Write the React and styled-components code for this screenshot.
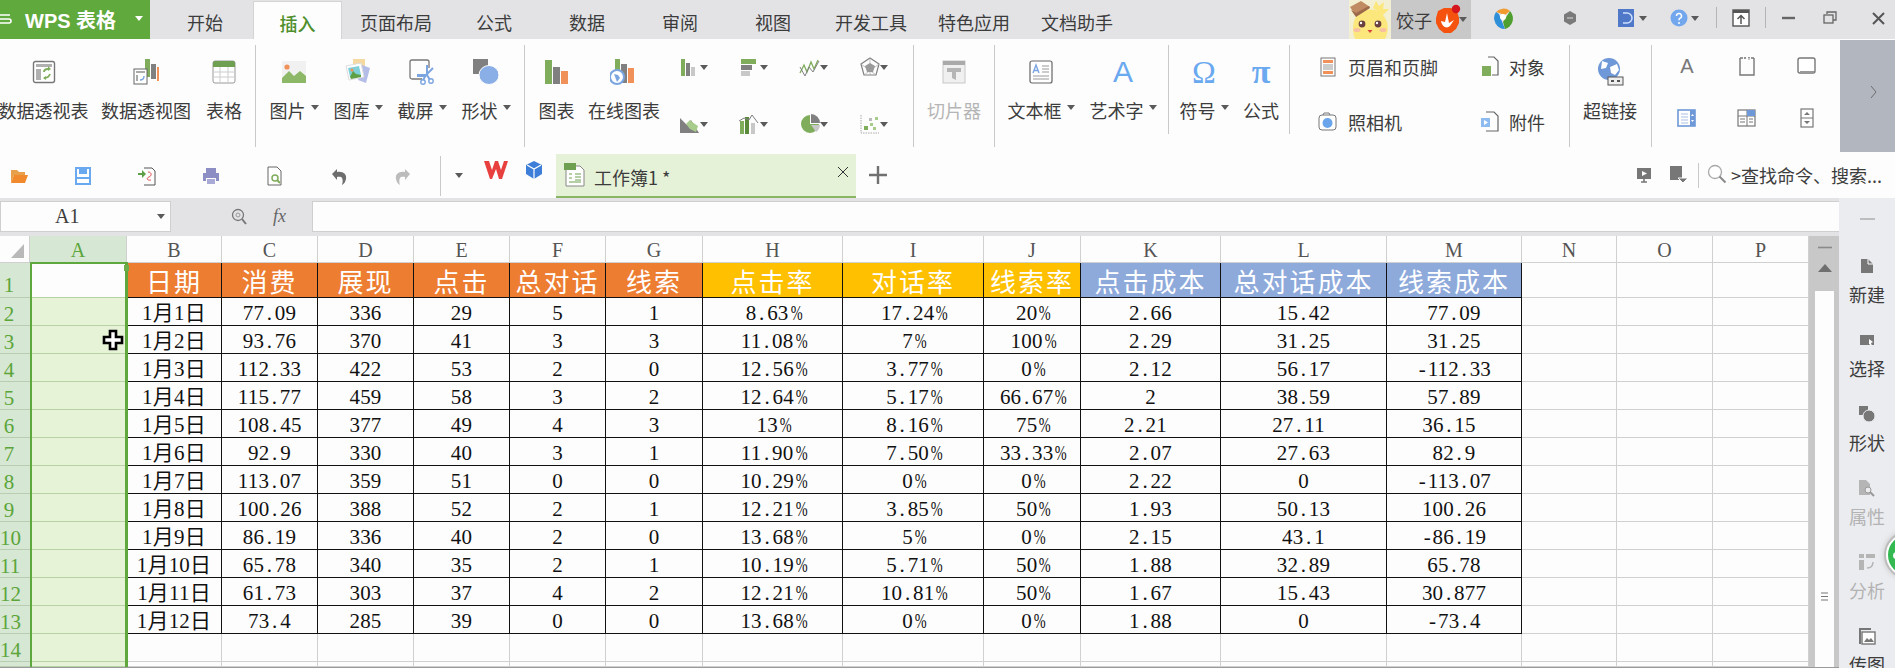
import React from 'react';
import styled, { createGlobalStyle } from 'styled-components';

const G = '#7fad5c';
const GR = '#808080';
const OR = '#f0915a';
const BL = '#7aa5e0';

const Global = createGlobalStyle`
    html, body { margin: 0; padding: 0; background: #fdfdfd; }
    * { box-sizing: border-box; }
`;

const Page = styled.div`
    width: 1895px;
    height: 668px;
    overflow: hidden;
    display: flex;
    flex-direction: column;
    font-family: "Noto Sans CJK SC", "Liberation Sans", sans-serif;
    font-size: 18px;
    color: #3c3c3c;
    background: #fdfdfd;
`;

/* title bar */
const TitleBar = styled.div`
    height: 39px;
    flex: none;
    display: flex;
    background: #e3e3e6;
`;

const AppMenu = styled.div`
    width: 150px;
    display: flex;
    align-items: center;
    padding-left: 25px;
    position: relative;
    background: #60a93c;
    color: #fff;
    font-family: "Liberation Sans", "Noto Sans CJK SC", sans-serif;
    font-size: 20px;
    font-weight: 700;
    white-space: nowrap;
    svg { position: absolute; left: 0; top: 13px; }
    i {
        position: absolute;
        left: 135px;
        top: 16px;
        border: 4px solid transparent;
        border-top: 5px solid #fff;
        border-bottom: 0;
    }
`;

const Tabs = styled.div`
    display: flex;
    padding-left: 7px;
`;

const Tab = styled.div`
    width: ${p => p.$w}px;
    display: flex;
    justify-content: center;
    align-items: center;
    padding-top: 5px;
    white-space: nowrap;
    ${p => p.$active && `
        margin-top: 1px;
        background: #fdfdfd;
        border: 1px solid #d4d4d4;
        border-bottom: 0;
        color: #4f8f2c;
        font-weight: 500;
    `}
`;

const TitleRight = styled.div`
    margin-left: auto;
    display: flex;
`;

const UserChip = styled.div`
    width: 122px;
    display: flex;
    align-items: center;
    background: #c8c8c8;
    span { margin-left: 5px; white-space: nowrap; }
`;

const Slot = styled.div`
    width: ${p => p.$w}px;
    padding-left: ${p => p.$pad || 0}px;
    padding-bottom: 3px;
    display: flex;
    justify-content: center;
    align-items: center;
    gap: 3px;
`;

const TopSep = styled.div`
    width: 1px;
    height: 21px;
    margin-top: 7px;
    margin-left: ${p => p.$ml || 0}px;
    background: #b4b4b4;
`;

const Caret = styled.i`
    display: inline-block;
    flex: none;
    width: 0;
    height: 0;
    margin-left: ${p => p.$ml ?? 5}px;
    margin-bottom: ${p => p.$mb ?? 5}px;
    border-left: 4px solid transparent;
    border-right: 4px solid transparent;
    border-top: 5px solid ${p => p.$color || '#5a5a5a'};
`;

const Ico = styled.svg`
    display: block;
    flex: none;
`;

const Svg = ({ w = 24, h = 24, children }) => (
    <Ico width={w} height={h} viewBox={`0 0 ${w} ${h}`}>{children}</Ico>
);

/* ribbon */
const Ribbon = styled.div`
    height: 113px;
    flex: none;
    display: flex;
    background: #fdfdfd;
`;

const Group = styled.div`
    width: ${p => p.$w}px;
    height: ${p => (p.$short ? 89 : 102)}px;
    margin-top: 6px;
    padding-left: ${p => p.$pad || 0}px;
    display: flex;
    flex: none;
    border-right: ${p => (p.$last ? '0' : '1px solid #c9c9c9')};
`;

const BigBtn = styled.div`
    width: ${p => p.$w}px;
    flex: none;
    display: flex;
    flex-direction: column;
    align-items: center;
    padding-top: 7px;
    color: ${p => (p.$off ? '#b5b5b5' : 'inherit')};
`;

const BigIcon = styled.div`
    height: 40px;
    display: flex;
    align-items: center;
    justify-content: center;
`;

const BigGlyph = styled.span`
    font-family: ${p => (p.$serif ? '"Liberation Serif"' : '"Liberation Sans"')}, serif;
    font-size: ${p => p.$size || 30}px;
    font-weight: ${p => (p.$bold ? 700 : 400)};
    line-height: 40px;
    color: #6aa9f0;
`;

const BigLabel = styled.div`
    height: 24px;
    margin-top: 6px;
    line-height: 24px;
    display: flex;
    align-items: center;
    white-space: nowrap;
`;

const ChartGrid = styled.div`
    display: grid;
    grid-template-columns: repeat(4, 60px);
    grid-auto-rows: 30px;
    row-gap: 27px;
    padding-top: 7px;
`;

const ChartPick = styled.div`
    display: flex;
    align-items: center;
    padding-left: 18px;
    i { margin-left: -2px; margin-bottom: 0; }
`;

const SmallGrid = styled.div`
    display: grid;
    grid-template-columns: ${p => p.$cols};
    grid-auto-rows: 30px;
    row-gap: ${p => p.$gap}px;
    padding-top: ${p => p.$top}px;
    padding-left: ${p => p.$left}px;
`;

const SmallBtn = styled.div`
    display: flex;
    align-items: center;
    gap: 8px;
    white-space: nowrap;
`;

const SmallIcon = styled.div`
    display: flex;
    align-items: center;
    justify-content: center;
`;

const Letter = styled.span`
    font-family: "Liberation Sans", sans-serif;
    font-size: 20px;
    color: #777;
`;

const RibbonNext = styled.div`
    width: 55px;
    margin-top: 1px;
    padding-left: 12px;
    display: flex;
    align-items: center;
    justify-content: center;
    background: #b2b6be;
    svg { margin-bottom: 8px; }
`;

/* quick access */
const QuickBar = styled.div`
    height: 46px;
    flex: none;
    display: flex;
    background: #fdfdfd;
`;

const QuickIcons = styled.div`
    display: flex;
    align-items: center;
    gap: 44px;
    padding-left: 9px;
    svg { margin-top: 2px; }
`;

const QuickSep = styled.div`
    width: 1px;
    height: ${p => p.$h}px;
    margin: ${p => p.$top}px 0 0 ${p => p.$ml}px;
    background: #c9c9c9;
`;

const DocTools = styled.div`
    display: flex;
    align-items: center;
    padding-bottom: 8px;
`;

const DocTab = styled.div`
    width: 300px;
    height: 44px;
    margin-top: 2px;
    padding-left: 8px;
    display: flex;
    align-items: center;
    background: #e5f2d8;
    border-bottom: 2px solid #8ab565;
    span { margin-left: 8px; margin-top: 4px; white-space: nowrap; }
    svg:last-child { margin-left: auto; margin-right: 7px; margin-bottom: 6px; }
`;

const AddTab = styled.div`
    width: 44px;
    display: flex;
    justify-content: center;
    align-items: center;
`;

const QuickRight = styled.div`
    margin-left: auto;
    padding-right: 13px;
    display: flex;
    align-items: center;
    white-space: nowrap;
`;

/* body */
const Body = styled.div`
    flex: 1;
    display: flex;
`;

const Main = styled.div`
    width: 1839px;
    padding-top: 3px;
    background: #e3e3e6;
`;

const FormulaBar = styled.div`
    height: 31px;
    margin-bottom: 4px;
    display: flex;
`;

const NameBox = styled.div`
    width: 171px;
    display: flex;
    align-items: center;
    padding-left: 54px;
    background: #fdfdfd;
    border: 1px solid #cfcfcf;
    font-family: "Liberation Serif", serif;
    font-size: 20px;
    i { margin-left: auto; margin-right: 5px; margin-bottom: 0; }
`;

const FxTools = styled.div`
    width: 141px;
    display: flex;
    align-items: center;
    padding-left: 60px;
    gap: 26px;
    span {
        font-family: "Liberation Serif", serif;
        font-style: italic;
        font-size: 18px;
        color: #666;
    }
`;

const FormulaInput = styled.div`
    flex: 1;
    background: #fdfdfd;
    border: 1px solid #cfcfcf;
    border-right: 0;
`;

const SheetRow = styled.div`
    height: 432px;
    display: flex;
    background: #fdfdfd;
    border-bottom: 1px solid #9a9a9a;
`;

const SheetGrid = styled.div`
    position: relative;
    width: 1809px;
    display: grid;
    grid-template-columns: 30px 97px 95px 96px 96px 96px 96px 97px 140px 141px 97px 140px 166px 135px 95px 96px 96px;
    grid-template-rows: 27px 35px repeat(13, 28px) 5px;
    font-family: "Liberation Serif", "Noto Sans CJK SC", serif;
`;

const Corner = styled.div`
    position: relative;
    border-right: 1px solid #d0d0d0;
    border-bottom: 1px solid #d0d0d0;
    i {
        position: absolute;
        left: 11px;
        top: 8px;
        border-left: 13px solid transparent;
        border-bottom: 14px solid #b9b9b9;
    }
`;

const ColHead = styled.div`
    display: flex;
    align-items: center;
    justify-content: center;
    padding-top: 3px;
    font-size: 20px;
    color: ${p => (p.$on ? '#5ba53a' : '#555')};
    background: ${p => (p.$on ? '#d6e7d3' : '#fdfdfd')};
    border-right: 1px solid #d0d0d0;
    border-bottom: 1px solid #d0d0d0;
`;

const RowHead = styled.div`
    padding-right: 12px;
    text-align: center;
    font-size: 21px;
    line-height: 32px;
    height: 100%;
    overflow: hidden;
    color: #5ba53a;
    background: #d6e7d3;
    border-bottom: 1px solid #b9cdb3;
    ${p => p.$tall && 'line-height: 44px;'}
`;

const SelCell = styled.div`
    background: ${p => (p.$first ? '#fdfdfd' : '#e6f3d7')};
    border-bottom: 1px solid #b7d3a5;
`;

const BlankCell = styled.div`
    border-right: 1px solid #d0d0d0;
    border-bottom: 1px solid #d0d0d0;
`;

const HeadCell = styled.div`
    display: flex;
    align-items: center;
    justify-content: center;
    font-size: 26px;
    letter-spacing: 2px;
    white-space: nowrap;
    color: #fff;
    background: ${p => p.$bg};
    border-right: 1px solid #111;
    border-bottom: 1px solid #111;
`;

const DataCell = styled.div`
    display: flex;
    align-items: center;
    justify-content: center;
    padding-top: 3px;
    padding-right: ${p => (p.$shift ? 10 : 0)}px;
    font-size: 21px;
    line-height: 24px;
    letter-spacing: 0.2px;
    white-space: nowrap;
    color: #111;
    border-right: 1px solid #111;
    border-bottom: 1px solid #111;
`;

const Half = styled.span`
    display: inline-block;
    width: 10.7px;
    text-align: center;
    ${p => p.$squeeze && 'transform: scaleX(0.68);'}
`;

const SelectionFrame = styled.div`
    position: absolute;
    left: 30px;
    top: 26px;
    bottom: 0;
    width: 98px;
    border-left: 2px solid #5fa83e;
    border-right: 3px solid #5fa83e;
    border-top: 2px solid #5fa83e;
    pointer-events: none;
`;

const FillHandle = styled.div`
    position: absolute;
    right: -4px;
    top: 1px;
    width: 6px;
    height: 6px;
    background: #6dae4b;
    border-left: 1px solid #fff;
`;

const CrossCursor = styled.div`
    position: absolute;
    left: 70px;
    top: 65px;
`;

const ScrollBar = styled.div`
    width: 30px;
    display: flex;
    flex-direction: column;
    padding: 0 5px 0 6px;
    background: #c8c8c8;
`;

const ScrollTop = styled.div`
    height: 55px;
    flex: none;
    display: flex;
    flex-direction: column;
    align-items: center;
    padding-top: 10px;
    gap: 15px;
`;

const ScrollTrack = styled.div`
    flex: 1;
    display: flex;
    align-items: flex-end;
    justify-content: center;
    padding-bottom: 66px;
    background: #fdfdfd;
`;

const SidePanel = styled.div`
    position: relative;
    width: 56px;
    height: 470px;
    padding-top: 20px;
    display: flex;
    flex-direction: column;
    align-items: center;
    background: #ebecf0;
`;

const SideGrip = styled.div`
    width: 15px;
    height: 4px;
    margin-bottom: 34px;
    border-top: 1px solid #bdbdbd;
    border-bottom: 1px solid #bdbdbd;
`;

const SideItem = styled.div`
    height: 74px;
    flex: none;
    display: flex;
    flex-direction: column;
    align-items: center;
    color: ${p => (p.$off ? '#b3b3b3' : 'inherit')};
`;

const SideIcon = styled.div`
    height: 24px;
    display: flex;
    align-items: center;
`;

const SideLabel = styled.div`
    margin-top: 4px;
    line-height: 24px;
`;

const FloatBall = styled.div`
    position: absolute;
    left: 47px;
    top: 335px;
    width: 44px;
    height: 44px;
    display: flex;
    align-items: center;
    padding-left: 5px;
    border-radius: 50%;
    background: #34b852;
    border: 2px solid #fff;
    box-shadow: 0 0 0 2px #bcbcbc, 0 0 5px 3px #d0d0d0;
    i { width: 7px; height: 7px; border-radius: 50%; background: #fff; }
`;

/* drawings */
const icons = {
    pivot: <Svg><rect x="1.5" y="1.5" width="21" height="21" rx="2" fill="#fff" stroke="#777" strokeWidth="1.4"/><path d="M4 4h16v3H4zM4 9h5v11H4z" fill="#b0b0b0"/><path d="M12 18c3 0 5-1 6-4M16 9c-2 0-4 1-4 3" fill="none" stroke={G} strokeWidth="1.8"/><path d="M16 6l3 3-3 2zM14 16l-3 2 3 2z" fill={G}/></Svg>,
    pivotChart: <Svg w={26} h={26}><path d="M12 0h5v18h-5z" fill={G}/><path d="M18 5h5v15h-5z" fill={GR}/><path d="M24 8h2v14h-2z" fill={OR}/><rect x="1" y="10" width="13" height="15" fill="#fff" stroke="#666"/><path d="M3 12h9v2H3zM3 16h2v6H3z" fill="#aaa"/><path d="M7 21c3 0 4-1 4-4" fill="none" stroke={BL} strokeWidth="1.4"/></Svg>,
    table: <Svg><rect x="1" y="1" width="22" height="22" rx="2" fill="#fff" stroke="#999"/><path d="M1 3a2 2 0 0 1 2-2h18a2 2 0 0 1 2 2v4H1z" fill="#6f9f50"/><path d="M1 12h22M1 17h22M8 7v16M16 7v16" stroke="#ccc"/></Svg>,
    picture: <Svg w={26} h={26}><rect x="1" y="2" width="24" height="22" fill="#f1f1f1"/><circle cx="6" cy="8" r="2.6" fill={OR}/><path d="M1 24v-5l7-7 5 5 6-5 6 5v7z" fill="#8db867"/></Svg>,
    gallery: <Svg w={26} h={26}><path d="M8 0h12v18H8z" fill="#f5d9a0"/><path d="M17 6l8 3-4 15-8-3z" fill="#b4bde8"/><path d="M1 7l15-3 3 14-15 3z" fill="#fff" stroke="#ddd"/><path d="M3 9l11-2 2 9-11 2z" fill="#7fd0d8"/><path d="M5 18l3-6 3 3 5 1 0 2-10 2z" fill="#5f9f45"/><circle cx="7" cy="11" r="1.5" fill={OR}/></Svg>,
    shot: <Svg w={26} h={26}><path d="M13 20H3a2 2 0 0 1-2-2V3a2 2 0 0 1 2-2h15a2 2 0 0 1 2 2v6" fill="none" stroke="#777" strokeWidth="1.3"/><path d="M18 6v10l3 5M24 9l-7 7-3 5" fill="none" stroke={BL} strokeWidth="2"/><path d="M8 15h9v3H8z" fill={BL}/><circle cx="14" cy="23" r="2.2" fill="#fff" stroke={BL} strokeWidth="1.4"/><circle cx="22" cy="22" r="2.2" fill="#fff" stroke={BL} strokeWidth="1.4"/></Svg>,
    shape: <Svg w={26} h={26}><rect x="0" y="0" width="15" height="15" fill={GR}/><ellipse cx="16" cy="16" rx="10" ry="9.5" fill="#8aaee6" stroke="#fff"/></Svg>,
    chart: <Svg w={26} h={26}><path d="M1 1h7v24H1z" fill={G}/><path d="M9 8h7v17H9z" fill={GR}/><path d="M17 12h7v13h-7z" fill={OR}/></Svg>,
    online: <Svg w={28} h={26}><path d="M5 0h5v14H5z" fill={G}/><path d="M11 5h6v19h-6z" fill={GR}/><path d="M18 9h6v15h-6z" fill={OR}/><circle cx="7" cy="18" r="7" fill="#fff" stroke={BL} strokeWidth="2"/><path d="M4 15l4 1 2 3-3 4z" fill={BL}/></Svg>,
    mColumn: <Svg><path d="M3 4h4v17H3z" fill={G}/><path d="M8 8h4v13H8z" fill={GR}/><path d="M13 12h4v9h-4z" fill="#c8c8c8"/></Svg>,
    mBar: <Svg><path d="M3 4h15v5H3z" fill={G}/><path d="M3 10h11v5H3z" fill={GR}/><path d="M3 16h9v5H3z" fill="#c8c8c8"/></Svg>,
    mLine: <Svg><path d="M2 18l4-8 3 7 4-10 3 7 4-9" fill="none" stroke={G} strokeWidth="1.3"/><path d="M2 12l5 9 4-9 4 5 6-11" fill="none" stroke={GR}/></Svg>,
    mRadar: <Svg><path d="M12 3l9 6-3 11H6L3 9z" fill="none" stroke={GR} strokeWidth="1.2"/><path d="M12 3v17M3 9l15 11M21 9L6 20" stroke="#aaa" strokeWidth=".7"/><path d="M12 8l5 3-2 6H9l-2-6z" fill="#9a9a9a"/></Svg>,
    mArea: <Svg><path d="M2 21V6l7 7 4-5 8 13z" fill={GR}/><path d="M8 12l4-4 2 2 6 4-2 6-6-3z" fill="#a8cc8c"/></Svg>,
    mCombo: <Svg><path d="M2 9h4v13H2z" fill={G}/><path d="M7 5h4v17H7z" fill="#5a8a3c"/><path d="M13 11h4v11h-4z" fill="#c8c8c8"/><path d="M1 9l5-3 5 2 3-5 6 8" fill="none" stroke={GR}/></Svg>,
    mPie: <Svg><path d="M12 3a9 9 0 1 0 9 9h-9z" fill={G}/><path d="M13 2a9 9 0 0 1 9 9h-9z" fill={GR}/><path d="M13 13h9a9 9 0 0 1-4 7z" fill="#c8c8c8"/></Svg>,
    mScatter: <Svg><path d="M3 3v18h18" fill="none" stroke="#aaa" strokeDasharray="1.5 1"/><path d="M6 14h4v4H6z" fill={G}/><path d="M12 11h3v3h-3zM17 5h3v3h-3zM15 15h3v3h-3z" fill="#a8cc8c"/><path d="M11 6h3v3h-3z" fill="#bbb"/></Svg>,
    slicer: <Svg><rect x="1" y="1" width="22" height="22" fill="#f0f0f0" stroke="#c8c8c8"/><path d="M1 1h22v4H1z" fill="#aaa"/><path d="M5 8h14v4h-5v8l-4-2v-6H5z" fill="#b5b5b5"/></Svg>,
    textbox: <Svg><rect x="1" y="1" width="22" height="22" rx="2" fill="#fff" stroke="#666" strokeWidth="1.2"/><path d="M4 13l3-8 3 8M5 10.5h4" fill="none" stroke={BL} strokeWidth="1.4"/><path d="M13 6h7M13 9h7M13 12h7M4 16h16M4 19h16" stroke="#999"/></Svg>,
    header: <Svg><rect x="5" y="3" width="14" height="18" fill="#fff" stroke="#777"/><path d="M7 5h10v3H7zM7 16h10v3H7z" fill={OR}/><path d="M7 10h10M7 12h10M7 14h10" stroke="#999"/></Svg>,
    object: <Svg><path d="M11 2h6l4 4v14h-6" fill="none" stroke="#666" strokeWidth="1.2"/><path d="M5 11h9v10H5z" fill={G}/></Svg>,
    camera: <Svg><rect x="3" y="5" width="17" height="15" rx="3" fill="#fff" stroke="#777"/><path d="M7 5l1-2h5l1 2" fill="none" stroke="#777"/><circle cx="11.5" cy="13" r="5" fill="#6aa5ec"/></Svg>,
    attach: <Svg><path d="M9 2h8l4 4v15H9" fill="none" stroke="#666" strokeWidth="1.2"/><path d="M4 8h9v9H4z" fill="#8fbcf0"/><path d="M7 10l4 2.5L7 15z" fill="#fff"/></Svg>,
    link: <Svg w={28} h={30}><circle cx="13" cy="12" r="11" fill="#6f98d8"/><path d="M6 4l6 2-2 5-5 1zM14 10l7-3 2 6-4 5-4-2z" fill="#fff"/><rect x="12" y="20" width="15" height="8" fill="#eee" stroke="#555"/><path d="M15 24h3M21 24h3" stroke="#555" strokeWidth="2"/></Svg>,
    xyz: <Svg><path d="M5 4h3M16 4h3M5 4v17h14V4" fill="none" stroke="#777" strokeWidth="1.4"/><path d="M9 3l2 2M11 3l-2 2M13 3l1 1 1-1M14 4v2" stroke="#777" strokeWidth=".8" fill="none"/></Svg>,
    frame: <Svg><rect x="3" y="4" width="17" height="15" rx="2" fill="#fff" stroke="#777" strokeWidth="1.4"/><path d="M5 18h14" stroke="#999" strokeWidth="2"/></Svg>,
    list: <Svg><rect x="3" y="4" width="17" height="16" fill="#fff" stroke="#6f98d8" strokeWidth="1.6"/><path d="M6 8h7M6 11h7M6 14h7M6 17h7" stroke="#aac0e6"/><path d="M15 4h5v16h-5z" fill="#6f98d8"/><path d="M16 10l1.5-2 1.5 2zM16 14l1.5 2 1.5-2z" fill="#fff"/></Svg>,
    form: <Svg><rect x="3" y="4" width="17" height="16" fill="#fff" stroke="#777" strokeWidth="1.2"/><path d="M3 10h17M12 4v16M5 13h5M5 16h5M14 13h4M14 16h4" stroke="#777"/><path d="M12 4h8v6h-8z" fill="#6f98d8"/></Svg>,
    spin: <Svg><rect x="6" y="3" width="12" height="18" fill="#fff" stroke="#777" strokeWidth="1.2"/><path d="M9 9l3-3 3 3zM9 15l3 3 3-3z" fill="#777"/><path d="M6 12h12" stroke="#777"/></Svg>,
    folder: <Svg w={20} h={18}><path d="M2 3h6l2 2h6v3H5L2 16z" fill="#e9a04a"/><path d="M5 8h14l-3 8H2z" fill="#f08a2c"/></Svg>,
    save: <Svg w={20} h={20}><path d="M3 2h14v16H3z" fill="#fff" stroke="#6aa9f0" strokeWidth="2"/><path d="M6 2h8v6H6z" fill="#6aa9f0"/><path d="M3 12h14" stroke="#6aa9f0" strokeWidth="2"/></Svg>,
    output: <Svg w={20} h={20}><path d="M7 2h8l3 3v14H7" fill="none" stroke="#555"/><path d="M1 7h4V4l4 4-4 4V9H1z" fill="#5f9f45"/><path d="M11 6c4 0 4 4 1 5s-2 4 2 3" fill="none" stroke="#e05050"/></Svg>,
    print: <Svg w={20} h={20}><path d="M5 2h10v5H5z" fill="#8d8fc4"/><path d="M2 7h16v8h-3v-3H5v3H2z" fill="#8d8fc4"/><path d="M6 13h8v5H6z" fill="#a9abd6"/></Svg>,
    preview: <Svg w={20} h={20}><path d="M3 1h9l4 4v14H3z" fill="#fff" stroke="#666"/><circle cx="10" cy="12" r="3" fill="#fff" stroke={G} strokeWidth="1.5"/><path d="M12 14l3 3" stroke={G} strokeWidth="2"/></Svg>,
    undo: <Svg w={20} h={20}><path d="M3 8l5-5v3c6-1 10 2 9 7-.5 3-2 5-4 6 1-3 1-7-1-8-1-.5-3-.5-4 0v3z" fill="#6e6e6e"/></Svg>,
    redo: <Svg w={20} h={20}><path d="M17 8l-5-5v3C6 5 2 8 3 13c.5 3 2 5 4 6-1-3-1-7 1-8 1-.5 3-.5 4 0v3z" fill="#bcbcbc"/></Svg>,
    wps: <Svg w={26} h={20}><path d="M1 1h5l3 9 3-9h3l3 9 3-9h4l-6 18h-3l-3-10-4 10H7z" fill="#e8403f"/></Svg>,
    cube: <Svg w={18} h={20}><path d="M9 1l8 4v9l-8 5-8-5V5z" fill="#3d7fd8"/><path d="M2 5l7 4 7-4M9 9v10" fill="none" stroke="#fff" strokeWidth="1.2"/></Svg>,
    sheet: <Svg w={22} h={26}><path d="M2 4h14l4 4v16H2z" fill="#fff" stroke="#888"/><path d="M0 1h12v7H0z" fill="#6f9f50"/><path d="M5 12h3M5 16h3M11 12h6M11 15h6M11 18h6M5 20h12" stroke="#6f9f50"/></Svg>,
    close: <Svg w={12} h={12}><path d="M1 1l10 10M11 1L1 11" stroke="#333"/></Svg>,
    plus: <Svg w={18} h={18}><path d="M9 0v18M0 9h18" stroke="#707070" strokeWidth="2.4"/></Svg>,
    play: <Svg w={20} h={20}><path d="M3 3h14v11H3z" fill="#777"/><path d="M8 6l5 2.5L8 11z" fill="#fff"/><path d="M7 17h6M10 14v3" stroke="#777" strokeWidth="1.6"/></Svg>,
    note: <Svg w={20} h={20}><path d="M2 2h12v14H2z" fill="#777"/><path d="M10 14h10l-5 5z" fill="#777" stroke="#fdfdfd"/></Svg>,
    search: <Svg w={20} h={20}><circle cx="8" cy="8" r="6.5" fill="#fff" stroke="#a8a8a8" strokeWidth="1.3"/><path d="M12.5 12.5l6 6" stroke="#8a8a8a" strokeWidth="2"/></Svg>,
    zoom: <Svg w={16} h={18}><circle cx="7" cy="7" r="5.5" fill="none" stroke="#777" strokeWidth="1.3"/><path d="M11 11l4 5" stroke="#777" strokeWidth="2"/><circle cx="7" cy="7" r="2" fill="none" stroke="#999"/></Svg>,
    avatar: <Svg w={42} h={39}><rect width="42" height="39" fill="#f2efd2"/><path d="M6 39C2 28 4 17 12 12c7-4 17-3 22 3 6 7 6 16 2 24z" fill="#fbe77b"/><path d="M24 8l3-7 3 5 5-4-1 7 6 0-6 6z" fill="#fbe77b"/><path d="M1 7l11-6 9 6-14 9z" fill="#c08a62"/><path d="M2 10l5 7 14-9-1-2-13 7z" fill="#9c6a4a"/><circle cx="13" cy="24" r="3.4" fill="#6a4040"/><circle cx="29" cy="24" r="3.4" fill="#6a4040"/><circle cx="12" cy="23" r="1.2" fill="#fff"/><circle cx="28" cy="23" r="1.2" fill="#fff"/><ellipse cx="8" cy="30" rx="3.5" ry="2" fill="#f8c0a0"/><ellipse cx="34" cy="30" rx="3.5" ry="2" fill="#f8c0a0"/><path d="M18.500 30h5l-2.500 3z" fill="#d8423a"/></Svg>,
    flame: <Svg w={30} h={34}><path d="M6 8l6-3h7l6 3 2 7v5l-3 6-5 4h-7l-5-4-3-6v-5z" fill="#f4520e"/><path d="M15 10l-2 9-4-1c1 6 6 8 9 5l4-6-5 3z" fill="#fff"/><circle cx="24" cy="6" r="4.200" fill="#d5151d"/></Svg>,
    colorLogo: <Svg w={22} h={24}><path d="M4 6a10 10 0 0 1 14-1l-5 4z" fill="#f09a30"/><path d="M18 5a11 11 0 0 1-5 18l-2-7z" fill="#4f9f30"/><path d="M4 6a11 11 0 0 0 9 17L7 8z" fill="#2f8fd8"/><circle cx="11" cy="11" r="3" fill="#fff"/></Svg>,
    hex: <Svg w={14} h={16}><path d="M7 1l6 3.500v7L7 15l-6-3.500v-7z" fill="#7a7a7a"/><path d="M4 8h6" stroke="#bbb" strokeWidth="1.5"/></Svg>,
    backup: <Svg w={18} h={20}><rect width="16" height="18" y="1" fill="#4f78c8"/><path d="M5 5h4a5 5 0 0 1 0 10H5" fill="none" stroke="#cfe0ff" strokeWidth="1.5"/></Svg>,
    help: <Svg w={18} h={18}><circle cx="9" cy="9" r="8.500" fill="#72a7ee"/><path d="M6.500 7a2.500 2.500 0 1 1 3.600 2.200c-.8.5-1.100 1-1.100 2" fill="none" stroke="#fff" strokeWidth="1.5"/><circle cx="9" cy="14" r="1" fill="#fff"/></Svg>,
    upload: <Svg w={18} h={18}><rect x="1" y="1" width="16" height="16" fill="#fff" stroke="#555" strokeWidth="1.4"/><path d="M1 1h16v3H1z" fill="#555"/><path d="M9 15V7M5.500 10L9 6.500l3.500 3.500" fill="none" stroke="#555" strokeWidth="1.5"/></Svg>,
    min: <Svg w={14} h={4}><path d="M0 2h13" stroke="#666" strokeWidth="2.4"/></Svg>,
    restore: <Svg w={14} h={14}><path d="M4 3V1h9v8h-3" fill="none" stroke="#666" strokeWidth="1.3"/><rect x="1" y="4" width="9" height="8" fill="none" stroke="#666" strokeWidth="1.3"/></Svg>,
    winClose: <Svg w={13} h={13}><path d="M1 1l11 11M12 1L1 12" stroke="#555" strokeWidth="2"/></Svg>,
    next: <Svg w={8} h={14}><path d="M1 1l5 6-5 6" fill="none" stroke="#6d6d6d"/></Svg>,
    sideNew: <Svg w={14} h={16}><path d="M1 1h7l5 5v9H1z" fill="#777"/><path d="M8 1v5h5" fill="none" stroke="#fff"/></Svg>,
    sideSelect: <Svg w={16} h={14}><path d="M1 2h14v10H1z" fill="#777"/><path d="M10 6l4 3-2 1 1 3-3-2z" fill="#fff"/></Svg>,
    sideShape: <Svg w={18} h={18}><path d="M1 1h9v9H1z" fill="#777"/><circle cx="11" cy="11" r="6" fill="#777" stroke="#ebecf0"/></Svg>,
    sideProp: <Svg w={18} h={18}><path d="M1 1h7l4 4v11H1z" fill="#b5b5b5"/><circle cx="10" cy="11" r="3" fill="#ebecf0" stroke="#999"/><path d="M12 13l4 4" stroke="#999" strokeWidth="2"/></Svg>,
    sideAnalyse: <Svg w={18} h={18}><path d="M1 1h5v4H1zM1 7h5v10H1zM8 1h9v4H8z" fill="#b5b5b5"/><path d="M9 15c4 0 6-2 6-6" fill="none" stroke="#b5b5b5" strokeWidth="1.4"/></Svg>,
    sidePic: <Svg w={18} h={18}><path d="M1 1h12v2H3v14H1z" fill="#777"/><rect x="4" y="5" width="13" height="12" fill="#fff" stroke="#777" strokeWidth="1.4"/><path d="M6 15l3-4 2 2 2-2 3 4z" fill="#777"/></Svg>,
    scrollMin: <Svg w={14} h={3}><path d="M0 1.500h14" stroke="#8a8a8a" strokeWidth="1.6"/></Svg>,
    scrollUp: <Svg w={14} h={8}><path d="M7 0l7 8H0z" fill="#6f6f6f"/></Svg>,
    scrollGrip: <Svg w={9} h={9}><path d="M1 1h7M1 4.500h7M1 8h7" stroke="#777"/></Svg>,
    cross: <Svg w={22} h={22}><path d="M8 2h6v6h6v6h-6v6H8v-6H2V8h6z" fill="#fff" stroke="#000" strokeWidth="2.6"/></Svg>,
};

/* data */
const tabs = [
    ['开始', 96], ['插入', 89, true], ['页面布局', 108], ['公式', 88], ['数据', 98],
    ['审阅', 88], ['视图', 98], ['开发工具', 98], ['特色应用', 108], ['文档助手', 98],
];

const columns = 'ABCDEFGHIJKLMNOP'.split('');

const headers = [
    ['日期', '#ed7d31'], ['消费', '#ed7d31'], ['展现', '#ed7d31'], ['点击', '#ed7d31'], ['总对话', '#ed7d31'], ['线索', '#ed7d31'],
    ['点击率', '#ffc000'], ['对话率', '#ffc000'], ['线索率', '#ffc000'],
    ['点击成本', '#8eaadb'], ['总对话成本', '#8eaadb'], ['线索成本', '#8eaadb'],
];

const rows = [
    ['1月1日', '77.09', '336', '29', '5', '1', '8.63%', '17.24%', '20%', '2.66', '15.42', '77.09'],
    ['1月2日', '93.76', '370', '41', '3', '3', '11.08%', '7%', '100%', '2.29', '31.25', '31.25'],
    ['1月3日', '112.33', '422', '53', '2', '0', '12.56%', '3.77%', '0%', '2.12', '56.17', '-112.33'],
    ['1月4日', '115.77', '459', '58', '3', '2', '12.64%', '5.17%', '66.67%', '2', '38.59', '57.89'],
    ['1月5日', '108.45', '377', '49', '4', '3', '13%', '8.16%', '75%', '2.21', '27.11', '36.15'],
    ['1月6日', '92.9', '330', '40', '3', '1', '11.90%', '7.50%', '33.33%', '2.07', '27.63', '82.9'],
    ['1月7日', '113.07', '359', '51', '0', '0', '10.29%', '0%', '0%', '2.22', '0', '-113.07'],
    ['1月8日', '100.26', '388', '52', '2', '1', '12.21%', '3.85%', '50%', '1.93', '50.13', '100.26'],
    ['1月9日', '86.19', '336', '40', '2', '0', '13.68%', '5%', '0%', '2.15', '43.1', '-86.19'],
    ['1月10日', '65.78', '340', '35', '2', '1', '10.19%', '5.71%', '50%', '1.88', '32.89', '65.78'],
    ['1月11日', '61.73', '303', '37', '4', '2', '12.21%', '10.81%', '50%', '1.67', '15.43', '30.877'],
    ['1月12日', '73.4', '285', '39', '0', '0', '13.68%', '0%', '0%', '1.88', '0', '-73.4'],
];

const chartPicks = ['mColumn', 'mBar', 'mLine', 'mRadar', 'mArea', 'mCombo', 'mPie', 'mScatter'];

const sideItems = [
    ['新建', 'sideNew'], ['选择', 'sideSelect'], ['形状', 'sideShape'],
    ['属性', 'sideProp', true], ['分析', 'sideAnalyse', true], ['传图', 'sidePic'],
];

// the sheet's font has half-width . % - so they get a cell of their own
const NumText = ({ text }) => text.split(/([.%-])/).map((part, i) => {
    if (part === '.' || part === '-') return <Half key={i}>{part}</Half>;
    if (part === '%') return <Half key={i} $squeeze>{part}</Half>;
    return part;
});

const Big = ({ w, icon, label, caret, off }) => (
    <BigBtn $w={w} $off={off}>
        <BigIcon>{icon}</BigIcon>
        <BigLabel>{label}{caret && <Caret />}</BigLabel>
    </BigBtn>
);

const Blanks = ({ n }) => Array.from({ length: n }, (_, i) => <BlankCell key={i} />);

const App = () => {
    return (
        <Page>
            <Global />
            <TitleBar>
                <AppMenu>
                    <svg width="12" height="12" viewBox="0 0 12 12"><path d="M0 2h10M0 6h9a2 2 0 0 1 0 4H0" fill="none" stroke="#fff" strokeWidth="1.6"/></svg>
                    WPS 表格
                    <i />
                </AppMenu>
                <Tabs>
                    {tabs.map(([name, w, active]) => <Tab key={name} $w={w} $active={active}>{name}</Tab>)}
                </Tabs>
                <TitleRight>
                    <UserChip>
                        {icons.avatar}
                        <span>饺子</span>
                        {icons.flame}
                        <Caret $ml={-3} $mb={0} />
                    </UserChip>
                    <Slot $w={64}>{icons.colorLogo}</Slot>
                    <Slot $w={70}>{icons.hex}</Slot>
                    <Slot $w={55}>{icons.backup}<Caret $ml={0} $mb={0} /></Slot>
                    <Slot $w={48}>{icons.help}<Caret $ml={0} $mb={0} /></Slot>
                    <TopSep $ml={8} />
                    <Slot $w={48}>{icons.upload}</Slot>
                    <TopSep />
                    <Slot $w={46}>{icons.min}</Slot>
                    <Slot $w={36}>{icons.restore}</Slot>
                    <Slot $w={47} $pad={13}>{icons.winClose}</Slot>
                </TitleRight>
            </TitleBar>

            <Ribbon>
                <Group $w={256}>
                    <Big w={87} icon={icons.pivot} label="数据透视表" />
                    <Big w={118} icon={icons.pivotChart} label="数据透视图" />
                    <Big w={38} icon={icons.table} label="表格" />
                </Group>
                <Group $w={269} $pad={6}>
                    <Big w={64} icon={icons.picture} label="图片" caret />
                    <Big w={64} icon={icons.gallery} label="图库" caret />
                    <Big w={64} icon={icons.shot} label="截屏" caret />
                    <Big w={64} icon={icons.shape} label="形状" caret />
                </Group>
                <Group $w={389}>
                    <Big w={63} icon={icons.chart} label="图表" />
                    <Big w={72} icon={icons.online} label="在线图表" />
                    <ChartGrid>
                        {chartPicks.map(name => (
                            <ChartPick key={name}>{icons[name]}<Caret /></ChartPick>
                        ))}
                    </ChartGrid>
                </Group>
                <Group $w={81}>
                    <Big w={80} icon={icons.slicer} label="切片器" off />
                </Group>
                <Group $w={174} $pad={5} $short>
                    <Big w={82} icon={icons.textbox} label="文本框" caret />
                    <Big w={82} icon={<BigGlyph>A</BigGlyph>} label="艺术字" caret />
                </Group>
                <Group $w={121} $pad={6} $short>
                    <Big w={58} icon={<BigGlyph $serif $size={32}>Ω</BigGlyph>} label="符号" caret />
                    <Big w={56} icon={<BigGlyph $serif $bold $size={34}>π</BigGlyph>} label="公式" />
                </Group>
                <Group $w={280}>
                    <SmallGrid $cols="161px 90px" $gap={25} $top={7} $left={26}>
                        <SmallBtn>{icons.header}页眉和页脚</SmallBtn>
                        <SmallBtn>{icons.object}对象</SmallBtn>
                        <SmallBtn>{icons.camera}照相机</SmallBtn>
                        <SmallBtn>{icons.attach}附件</SmallBtn>
                    </SmallGrid>
                </Group>
                <Group $w={82}>
                    <Big w={80} icon={icons.link} label="超链接" />
                </Group>
                <Group $w={188} $last>
                    <SmallGrid $cols="repeat(3, 60px)" $gap={22} $top={6} $left={5}>
                        <SmallIcon><Letter>A</Letter></SmallIcon>
                        <SmallIcon>{icons.xyz}</SmallIcon>
                        <SmallIcon>{icons.frame}</SmallIcon>
                        <SmallIcon>{icons.list}</SmallIcon>
                        <SmallIcon>{icons.form}</SmallIcon>
                        <SmallIcon>{icons.spin}</SmallIcon>
                    </SmallGrid>
                </Group>
                <RibbonNext>{icons.next}</RibbonNext>
            </Ribbon>

            <QuickBar>
                <QuickIcons>
                    {icons.folder}{icons.save}{icons.output}{icons.print}{icons.preview}{icons.undo}{icons.redo}
                </QuickIcons>
                <QuickSep $h={40} $top={4} $ml={27} />
                <DocTools>
                    <Caret $ml={14} $mb={-8} />
                    <Slot $w={44} $pad={22}>{icons.wps}</Slot>
                    <Slot $w={49} $pad={4}>{icons.cube}</Slot>
                </DocTools>
                <DocTab>
                    {icons.sheet}
                    <span>工作簿1 *</span>
                    {icons.close}
                </DocTab>
                <AddTab>{icons.plus}</AddTab>
                <QuickRight>
                    {icons.play}
                    <Slot $w={34} $pad={14}>{icons.note}</Slot>
                    <QuickSep $h={25} $top={0} $ml={10} />
                    <Slot $w={28} $pad={8}>{icons.search}</Slot>
                    &nbsp;&gt;查找命令、搜索...
                </QuickRight>
            </QuickBar>

            <Body>
                <Main>
                    <FormulaBar>
                        <NameBox>A1<Caret /></NameBox>
                        <FxTools>{icons.zoom}<span>fx</span></FxTools>
                        <FormulaInput />
                    </FormulaBar>
                    <SheetRow>
                        <SheetGrid>
                            <Corner><i /></Corner>
                            {columns.map((c, i) => <ColHead key={c} $on={i === 0}>{c}</ColHead>)}

                            <RowHead $tall>1</RowHead>
                            <SelCell $first />
                            {headers.map(([name, bg]) => <HeadCell key={name} $bg={bg}>{name}</HeadCell>)}
                            <Blanks n={3} />

                            {rows.map((row, r) => (
                                <React.Fragment key={r}>
                                    <RowHead>{r + 2}</RowHead>
                                    <SelCell />
                                    {row.map((val, c) => (
                                        <DataCell key={c} $shift={r === 4 && c >= 9}><NumText text={val} /></DataCell>
                                    ))}
                                    <Blanks n={3} />
                                </React.Fragment>
                            ))}

                            <RowHead>14</RowHead>
                            <SelCell />
                            <Blanks n={15} />

                            <RowHead />
                            <SelCell />
                            <Blanks n={15} />

                            <SelectionFrame>
                                <FillHandle />
                                <CrossCursor>{icons.cross}</CrossCursor>
                            </SelectionFrame>
                        </SheetGrid>
                        <ScrollBar>
                            <ScrollTop>{icons.scrollMin}{icons.scrollUp}</ScrollTop>
                            <ScrollTrack>{icons.scrollGrip}</ScrollTrack>
                        </ScrollBar>
                    </SheetRow>
                </Main>
                <SidePanel>
                    <SideGrip />
                    {sideItems.map(([label, icon, off]) => (
                        <SideItem key={label} $off={off}>
                            <SideIcon>{icons[icon]}</SideIcon>
                            <SideLabel>{label}</SideLabel>
                        </SideItem>
                    ))}
                    <FloatBall><i /></FloatBall>
                </SidePanel>
            </Body>
        </Page>
    );
};

export default App;
